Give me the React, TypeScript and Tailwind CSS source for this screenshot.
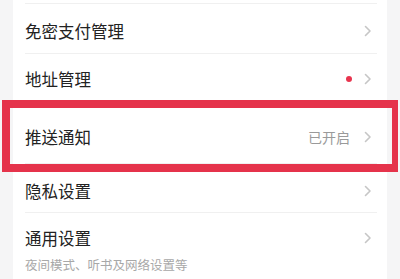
const Chevron = () => (
  <svg width="8" height="12" viewBox="0 0 8 12" className="shrink-0">
    <path d="M1.5 1.5 L6 6 L1.5 10.5" fill="none" stroke="#c6c6c6" strokeWidth="1.6" strokeLinecap="round" strokeLinejoin="round" />
  </svg>
);

const Divider = () => <div className="ml-[12px] mr-[10px] h-px bg-[#f0f0f0]" />;

export default function App() {
  return (
    <div
      className="relative w-[400px] h-[279px] overflow-hidden bg-[#f5f5f6]"
      style={{ fontFamily: '"Noto Sans CJK SC", "Noto Sans", sans-serif' }}
    >
      <div className="ml-[13px] w-[374px] h-full bg-white">
        <div className="h-[3px]" />
        <Divider />

        <div className="h-[49px] pt-[5px] pl-[12px] pr-[15px] flex items-center justify-between">
          <span className="text-[16.5px] leading-6 text-[#222]">免密支付管理</span>
          <Chevron />
        </div>
        <Divider />

        <div className="h-[52px] pb-[3px] pl-[12px] pr-[15px] flex items-center justify-between">
          <span className="text-[16.5px] leading-6 text-[#222]">地址管理</span>
          <div className="flex items-center gap-[12px]">
            <span className="w-[6px] h-[6px] rounded-full bg-[#e8344e]" />
            <Chevron />
          </div>
        </div>
        <Divider />

        <div className="h-[56px] pt-[4px] pl-[12px] pr-[15px] flex items-center justify-between">
          <span className="text-[16.5px] leading-6 text-[#222]">推送通知</span>
          <div className="flex items-center gap-[14px]">
            <span className="text-[14px] text-[#9a9a9a]">已开启</span>
            <Chevron />
          </div>
        </div>
        <Divider />

        <div className="h-[48px] pt-[5px] pl-[12px] pr-[15px] flex items-center justify-between">
          <span className="text-[16.5px] leading-6 text-[#222]">隐私设置</span>
          <Chevron />
        </div>
        <Divider />

        <div className="pt-[13px] pl-[12px] pr-[15px]">
          <div className="flex items-center justify-between">
            <span className="text-[16.5px] leading-6 text-[#222]">通用设置</span>
            <Chevron />
          </div>
          <div className="mt-[6px] text-[12.5px] leading-[18px] text-[#a8a8a8]">夜间模式、听书及网络设置等</div>
        </div>
      </div>

      <div className="pointer-events-none absolute left-[2px] top-[100px] w-[396px] h-[72px] border-[8px] border-r-[6px] border-[#e5334b]" />
    </div>
  );
}
